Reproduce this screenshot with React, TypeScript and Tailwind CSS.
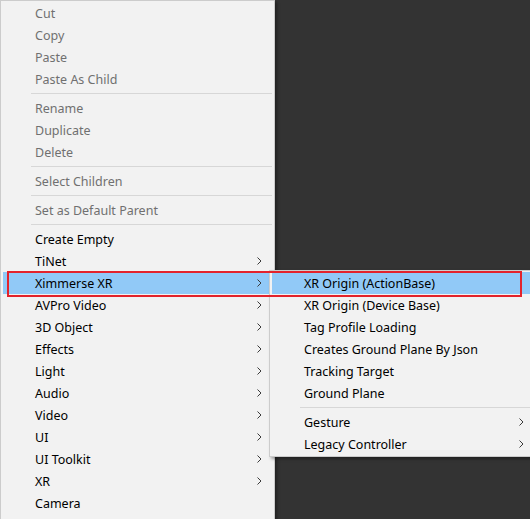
import React from 'react';

type Item =
  | { kind: 'item'; label: string; disabled?: boolean; sub?: boolean; active?: boolean }
  | { kind: 'sep' };

const mainItems: Item[] = [
  { kind: 'item', label: 'Cut', disabled: true },
  { kind: 'item', label: 'Copy', disabled: true },
  { kind: 'item', label: 'Paste', disabled: true },
  { kind: 'item', label: 'Paste As Child', disabled: true },
  { kind: 'sep' },
  { kind: 'item', label: 'Rename', disabled: true },
  { kind: 'item', label: 'Duplicate', disabled: true },
  { kind: 'item', label: 'Delete', disabled: true },
  { kind: 'sep' },
  { kind: 'item', label: 'Select Children', disabled: true },
  { kind: 'sep' },
  { kind: 'item', label: 'Set as Default Parent', disabled: true },
  { kind: 'sep' },
  { kind: 'item', label: 'Create Empty' },
  { kind: 'item', label: 'TiNet', sub: true },
  { kind: 'item', label: 'Ximmerse XR', sub: true, active: true },
  { kind: 'item', label: 'AVPro Video', sub: true },
  { kind: 'item', label: '3D Object', sub: true },
  { kind: 'item', label: 'Effects', sub: true },
  { kind: 'item', label: 'Light', sub: true },
  { kind: 'item', label: 'Audio', sub: true },
  { kind: 'item', label: 'Video', sub: true },
  { kind: 'item', label: 'UI', sub: true },
  { kind: 'item', label: 'UI Toolkit', sub: true },
  { kind: 'item', label: 'XR', sub: true },
  { kind: 'item', label: 'Camera' },
];

const subItems: Item[] = [
  { kind: 'item', label: 'XR Origin (ActionBase)', active: true },
  { kind: 'item', label: 'XR Origin (Device Base)' },
  { kind: 'item', label: 'Tag Profile Loading' },
  { kind: 'item', label: 'Creates Ground Plane By Json' },
  { kind: 'item', label: 'Tracking Target' },
  { kind: 'item', label: 'Ground Plane' },
  { kind: 'sep' },
  { kind: 'item', label: 'Gesture', sub: true },
  { kind: 'item', label: 'Legacy Controller', sub: true },
];

const Chevron = () => (
  <svg width="5" height="8" viewBox="0 0 5 8" className="shrink-0">
    <path d="M0.5 0.5 L4 4 L0.5 7.5" fill="none" stroke="#3a3a3a" strokeWidth="1" />
  </svg>
);

const MenuList: React.FC<{ items: Item[]; sepInset: string; arrowPad: string; rowMargin: string }> = ({
  items,
  sepInset,
  arrowPad,
  rowMargin,
}) => (
  <div className="flex flex-col">
    {items.map((it, i) =>
      it.kind === 'sep' ? (
        <div key={i} className={`pt-[3px] pb-[3px] ${sepInset}`}>
          <div className="h-px bg-[#d7d7d7]" />
        </div>
      ) : (
        <div
          key={i}
          className={`flex h-[22px] items-center ${rowMargin} ${it.active ? 'bg-[#91c9f7]' : ''}`}
        >
          <span
            className={`flex-1 pl-[32px] pt-[2px] text-[12.5px] leading-none ${
              it.disabled ? 'text-[#707070]' : 'text-black'
            }`}
          >
            {it.label}
          </span>
          {it.sub && <div className={arrowPad}><Chevron /></div>}
        </div>
      )
    )}
  </div>
);

export default function App() {
  return (
    <div
      className="relative h-[519px] w-[530px] overflow-hidden bg-[#333333]"
      style={{ fontFamily: '"Microsoft YaHei", "Noto Sans", sans-serif' }}
    >
      {/* main context menu */}
      <div className="w-[275px] border border-[#cccccc] bg-[#f2f2f2] py-px shadow-[2px_2px_3px_rgba(0,0,0,0.35)]">
        <MenuList items={mainItems} sepInset="ml-[30px] mr-[2px]" arrowPad="pr-[8px]" rowMargin="ml-[2px] mr-[4px]" />
        <div className="h-[10px]" />
      </div>

      {/* Ximmerse XR submenu */}
      <div className="absolute left-[269px] top-[270px] w-[290px] border border-[#cccccc] bg-[#f2f2f2] py-px shadow-[2px_2px_3px_rgba(0,0,0,0.35)]">
        <MenuList items={subItems} sepInset="ml-[30px]" arrowPad="pr-[34px]" rowMargin="ml-[2px]" />
      </div>

      {/* red annotation box */}
      <div className="absolute left-[7px] top-[271px] h-[26px] w-[515px] border-2 border-[#e3232c]" />
    </div>
  );
}
